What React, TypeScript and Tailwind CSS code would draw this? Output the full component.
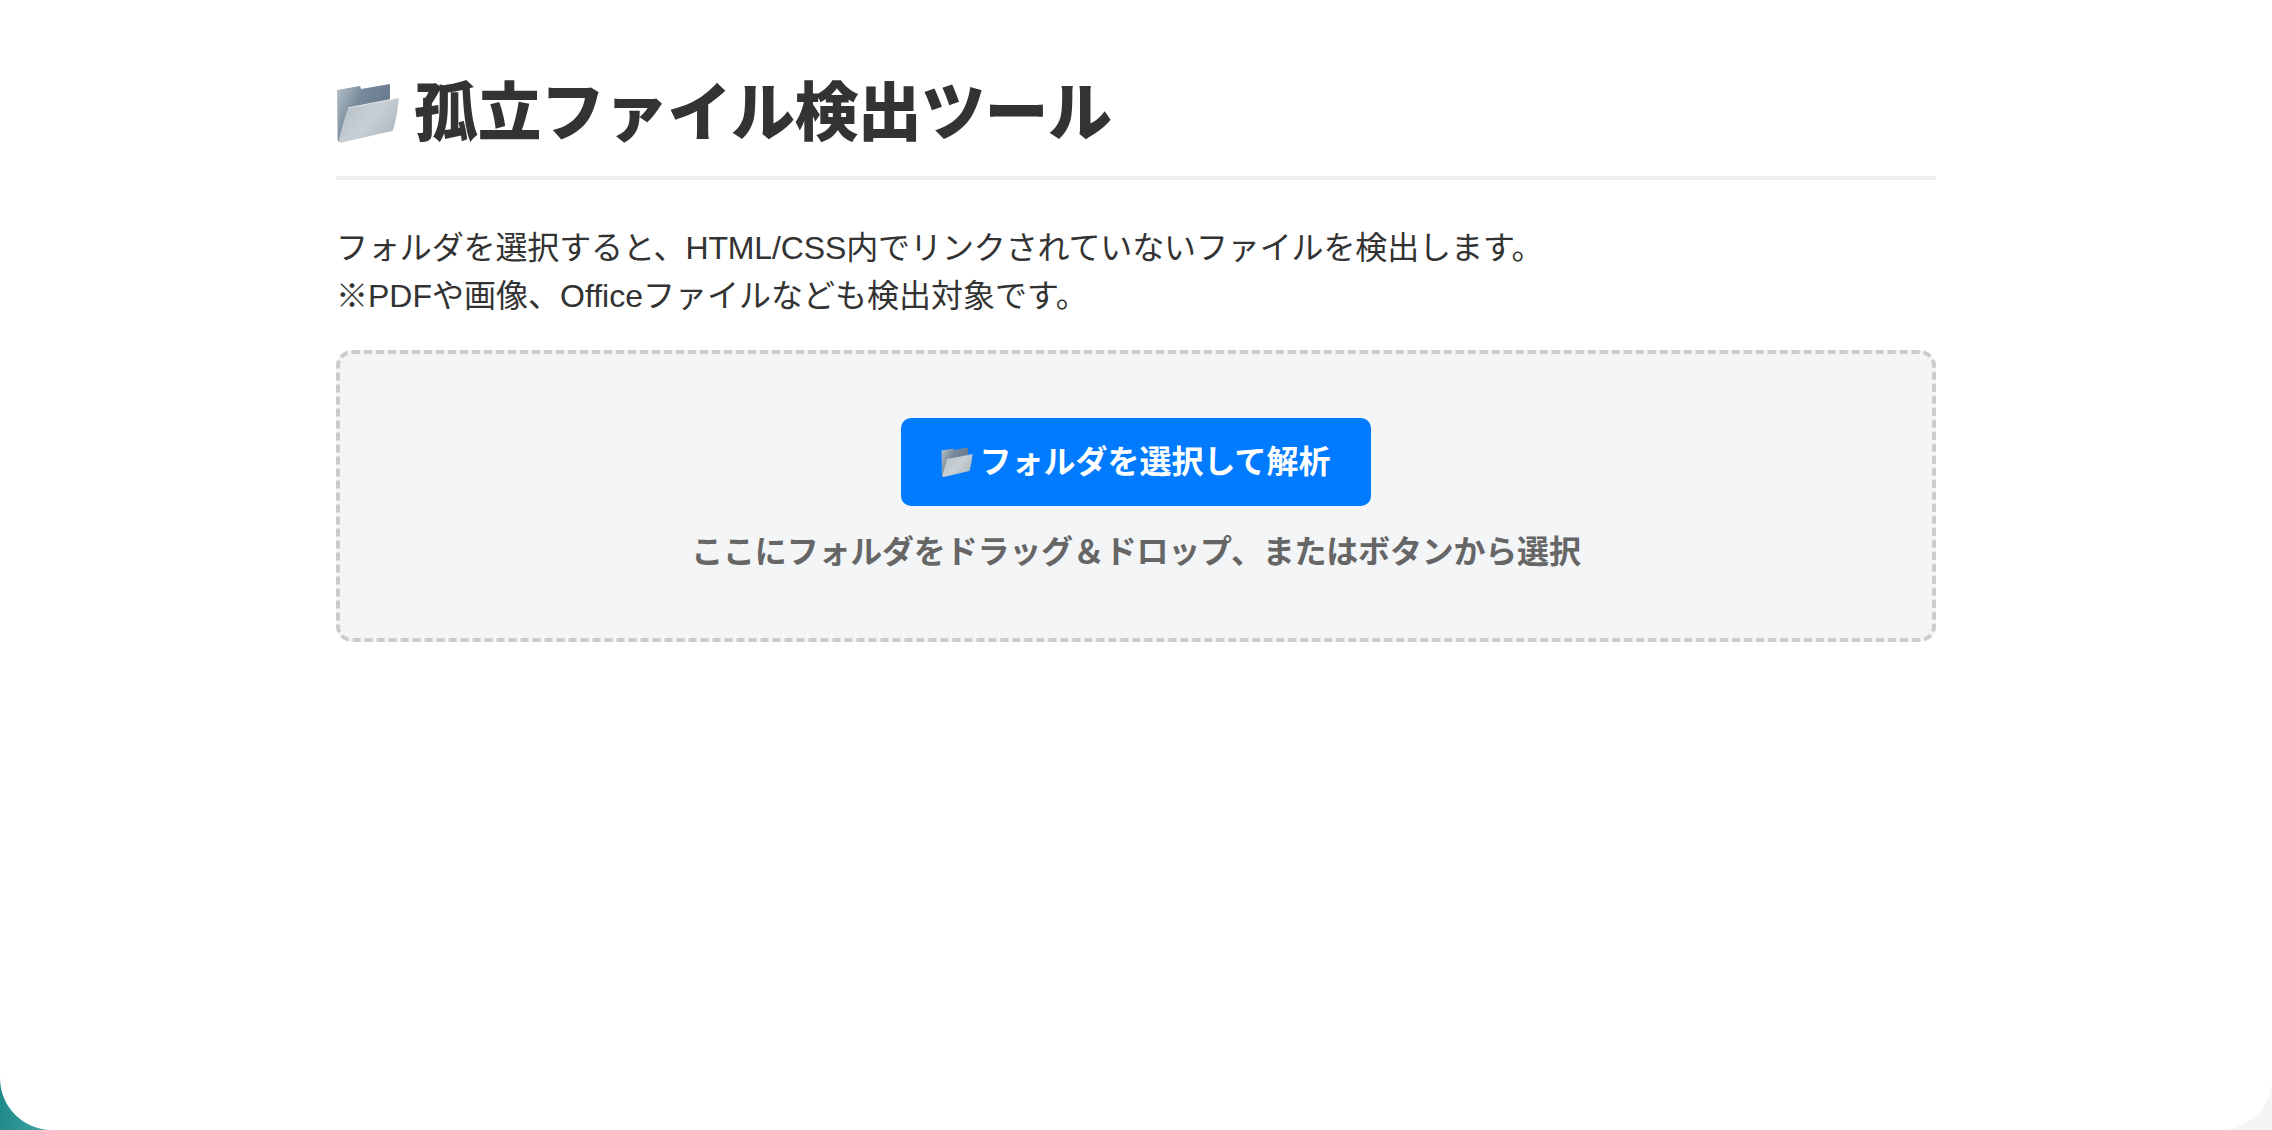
import React from 'react';

const FolderEmoji: React.FC<{ width: number; idPrefix: string; className?: string }> = ({ width, idPrefix, className }) => (
  <svg width={width} height={width * 0.95} viewBox="11 12 64 61" className={className}>
    <defs>
      <linearGradient id={`${idPrefix}-back`} x1="0" y1="0" x2="1" y2="0.5">
        <stop offset="0" stopColor="#b9c3ca" />
        <stop offset="0.45" stopColor="#76899a" />
        <stop offset="1" stopColor="#64798a" />
      </linearGradient>
      <linearGradient id={`${idPrefix}-front`} x1="0" y1="0.2" x2="1" y2="0.8">
        <stop offset="0" stopColor="#b4bfc7" />
        <stop offset="0.5" stopColor="#c8d0d5" />
        <stop offset="1" stopColor="#aab5bd" />
      </linearGradient>
    </defs>
    <path d="M12 19 L35 15 L36 18 L65 13 L65 28 L24 62 L14 71 C12.5 70 12.5 69 12.5 67 Z" fill={`url(#${idPrefix}-back)`} />
    <path d="M23 37 L74 27 C73 38 71 50 68 60 L16 72 C14 72 13.5 70 14 68 C17 56 20 46 23 37 Z" fill={`url(#${idPrefix}-front)`} />
    <path d="M23 37 L74 27" stroke="#e6ebee" strokeWidth="1" fill="none" />
  </svg>
);

export default function App() {
  return (
    <div className="h-screen bg-[linear-gradient(to_right,#1f8a8a_0px,#3fa0a0_40px,#d8d8d8_70px,#f5f5f5_100%)] overflow-hidden font-['Liberation_Sans','Noto_Sans_CJK_JP',sans-serif]">
      <div className="h-full bg-white rounded-b-[52px]">
        <div className="w-[1600px] ml-[336px] pt-[64px]">
          <h1 className="flex items-center h-[108px] pb-[4px] border-b-4 border-[#eeeeee] text-[64px] font-black text-[#333333] leading-none box-content">
            <span className="flex items-center gap-[14px] -mt-[10px]">
              <FolderEmoji width={64} idPrefix="title" />
              <span className="tracking-[-0.6px]">孤立ファイル検出ツール</span>
            </span>
          </h1>
          <p className="mt-[44px] text-[32px] leading-[48px] text-[#333333]">
            <span className="tracking-[-0.12px]">フォルダを選択すると、HTML/CSS内でリンクされていないファイルを検出します。</span>
            <br />
            ※PDFや画像、Officeファイルなども検出対象です。
          </p>
          <div className="mt-[30px] h-[292px] rounded-[16px] border-4 border-dashed border-[#cccccc] bg-[#f4f5f7] flex flex-col items-center pt-[64px]">
            <button className="w-[470px] h-[88px] rounded-[10px] bg-[#007bff] text-white text-[32px] font-bold flex items-center justify-center gap-[6px]">
              <FolderEmoji width={32} idPrefix="button" />
              <span>フォルダを選択して解析</span>
            </button>
            <p className="mt-[22px] text-[32px] leading-[48px] font-bold text-[#666666] tracking-[-0.2px]">
              ここにフォルダをドラッグ＆ドロップ、またはボタンから選択
            </p>
          </div>
        </div>
      </div>
    </div>
  );
}
